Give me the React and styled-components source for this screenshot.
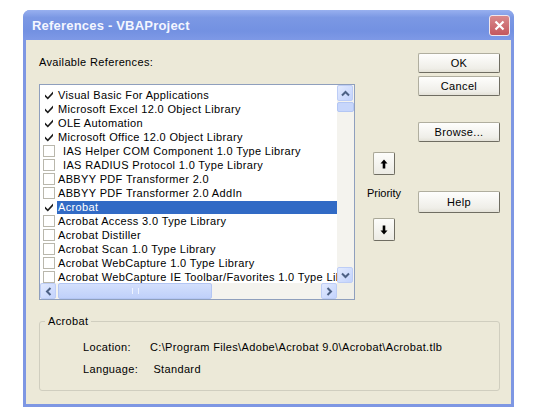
import React from "react";
import styled, { createGlobalStyle } from "styled-components";

const REFS = [
  { name: "Visual Basic For Applications", on: true },
  { name: "Microsoft Excel 12.0 Object Library", on: true },
  { name: "OLE Automation", on: true },
  { name: "Microsoft Office 12.0 Object Library", on: true },
  { name: "IAS Helper COM Component 1.0 Type Library", indent: true },
  { name: "IAS RADIUS Protocol 1.0 Type Library", indent: true },
  { name: "ABBYY PDF Transformer 2.0" },
  { name: "ABBYY PDF Transformer 2.0 AddIn" },
  { name: "Acrobat", on: true, selected: true },
  { name: "Acrobat Access 3.0 Type Library" },
  { name: "Acrobat Distiller" },
  { name: "Acrobat Scan 1.0 Type Library" },
  { name: "Acrobat WebCapture 1.0 Type Library" },
  { name: "Acrobat WebCapture IE Toolbar/Favorites 1.0 Type Library" },
];

const Global = createGlobalStyle`
  body {
    margin: 0;
    background: #ffffff;
    font-family: "Liberation Sans", Arial, sans-serif;
    font-size: 11px;
    letter-spacing: 0.35px;
    color: #000;
  }
`;

function Check() {
  return (
    <svg width="10" height="10" viewBox="0 0 10 10">
      <path d="M1 4.5 L3.8 7.2 L9 1.5 L9 4 L3.8 9.6 L1 6.8 Z" fill="#1b1b1b" />
    </svg>
  );
}

function Arrow({ down }) {
  return (
    <svg width="8" height="10" viewBox="0 0 8 10" style={{ transform: down ? "rotate(180deg)" : "none" }}>
      <path d="M4 0.5 L7.5 4.5 L5.3 4.5 L5.3 9.5 L2.7 9.5 L2.7 4.5 L0.5 4.5 Z" fill="#000" />
    </svg>
  );
}

function Chevron({ dir }) {
  const rot = { up: 0, down: 180, left: -90, right: 90 }[dir];
  return (
    <svg width="9" height="7" viewBox="0 0 9 7" style={{ transform: `rotate(${rot}deg)` }}>
      <path d="M1 5.5 L4.5 2 L8 5.5" fill="none" stroke="#4d6185" strokeWidth="2" />
    </svg>
  );
}

function App() {
  return (
    <>
      <Global />
      <Page>
        <Window>
          <TitleBar>
            <Title>References - VBAProject</Title>
            <CloseBtn>
              <svg width="11" height="11" viewBox="0 0 11 11">
                <path d="M1.5 1.5 L9.5 9.5 M9.5 1.5 L1.5 9.5" stroke="#fff" strokeWidth="2.2" />
              </svg>
            </CloseBtn>
          </TitleBar>
          <Client>
            <TopArea>
              <LeftCol>
                <Label>Available References:</Label>
                <ListBox>
                  <ListMain>
                    <Rows>
                      {REFS.map((r) => (
                        <Row key={r.name}>
                          <Box $on={r.on}>{r.on && <Check />}</Box>
                          <RowText $selected={r.selected} $indent={r.indent}>
                            {r.name}
                          </RowText>
                        </Row>
                      ))}
                    </Rows>
                    <VScroll>
                      <ScrollBtn><Chevron dir="up" /></ScrollBtn>
                      <VThumb />
                      <Track />
                      <ScrollBtn><Chevron dir="down" /></ScrollBtn>
                    </VScroll>
                  </ListMain>
                  <HScrollRow>
                    <HScroll>
                      <ScrollBtn><Chevron dir="left" /></ScrollBtn>
                      <HThumb>
                        <Grip />
                      </HThumb>
                      <Track />
                      <ScrollBtn><Chevron dir="right" /></ScrollBtn>
                    </HScroll>
                    <Corner />
                  </HScrollRow>
                </ListBox>
              </LeftCol>
              <MidCol>
                <ArrowBtn><Arrow /></ArrowBtn>
                <Priority>Priority</Priority>
                <ArrowBtn><Arrow down /></ArrowBtn>
              </MidCol>
              <RightCol>
                <Button>OK</Button>
                <Button $top={3}>Cancel</Button>
                <Button $top={26}>Browse...</Button>
                <Button $top={49} $h={22}>Help</Button>
              </RightCol>
            </TopArea>
            <Group>
              <Legend>Acrobat</Legend>
              <InfoGrid>
                <span>Location:</span>
                <span>C:\Program Files\Adobe\Acrobat 9.0\Acrobat\Acrobat.tlb</span>
                <span>Language:</span>
                <span>&nbsp;Standard</span>
              </InfoGrid>
            </Group>
          </Client>
        </Window>
      </Page>
    </>
  );
}

const Page = styled.div`
  padding: 10px 0 0 23px;
  width: 491px;
`;

const Window = styled.div`
  display: flex;
  flex-direction: column;
  width: 491px;
  background: #7e97e3;
  border-radius: 7px 7px 0 0;
  padding: 0 3px 3px 3px;
  box-sizing: border-box;
`;

const TitleBar = styled.div`
  height: 30px;
  margin: 0 -3px;
  padding: 0 4px 0 9px;
  display: flex;
  align-items: center;
  justify-content: space-between;
  border-radius: 7px 7px 0 0;
  background: linear-gradient(#98b0ef 0%, #7b98e4 25%, #7391e2 70%, #7e99e6 100%);
`;

const Title = styled.div`
  color: #f4f6ff;
  font-weight: bold;
  font-size: 13px;
  letter-spacing: 0.2px;
`;

const CloseBtn = styled.div`
  width: 19px;
  height: 19px;
  border: 1px solid #f1e6ea;
  border-radius: 3px;
  background: linear-gradient(#d9898c, #c4575d);
  display: flex;
  align-items: center;
  justify-content: center;
`;

const Client = styled.div`
  background: #ece9d8;
  padding: 15px 10px 13px 13px;
  display: flex;
  flex-direction: column;
`;

const TopArea = styled.div`
  display: flex;
`;

const LeftCol = styled.div`
  display: flex;
  flex-direction: column;
  width: 316px;
`;

const Label = styled.div`
  height: 14px;
  line-height: 14px;
  margin-bottom: 15px;
`;

const ListBox = styled.div`
  height: 216px;
  border: 1px solid #8f9fbd;
  background: #fff;
  box-sizing: border-box;
  display: flex;
  flex-direction: column;
`;

const ListMain = styled.div`
  flex: 1;
  display: flex;
  min-height: 0;
`;

const Rows = styled.div`
  flex: 1;
  overflow: hidden;
  padding-top: 3px;
`;

const Row = styled.div`
  height: 14px;
  display: flex;
  align-items: center;
  padding-left: 3px;
  white-space: nowrap;
`;

const Box = styled.div`
  width: 12px;
  height: 12px;
  flex: none;
  box-sizing: border-box;
  border: 1px solid ${(p) => (p.$on ? "#ffffff" : "#b9b7ac")};
  display: flex;
  align-items: center;
  justify-content: center;
  margin-right: 2px;
`;

const RowText = styled.div`
  flex: 1;
  height: 13px;
  line-height: 13px;
  padding-left: ${(p) => (p.$indent ? "6px" : "1px")};
  background: ${(p) => (p.$selected ? "#316ac5" : "transparent")};
  color: ${(p) => (p.$selected ? "#fff" : "#000")};
  overflow: hidden;
`;

const VScroll = styled.div`
  width: 17px;
  display: flex;
  flex-direction: column;
  background: #f4f3ee;
`;

const HScrollRow = styled.div`
  height: 16px;
  display: flex;
`;

const HScroll = styled.div`
  flex: 1;
  display: flex;
  background: #f4f3ee;
`;

const Corner = styled.div`
  width: 17px;
  background: #f0efe8;
`;

const ScrollBtn = styled.div`
  width: 16px;
  height: 16px;
  flex: none;
  box-sizing: border-box;
  border: 1px solid #bdcdf6;
  border-radius: 2px;
  background: linear-gradient(135deg, #e2eafe, #c3d3fd);
  display: flex;
  align-items: center;
  justify-content: center;
`;

const Track = styled.div`
  flex: 1;
`;

const VThumb = styled.div`
  height: 8px;
  margin-top: 1px;
  border: 1px solid #b3c6f4;
  border-radius: 2px;
  background: #c7d6fb;
`;

const HThumb = styled.div`
  width: 154px;
  margin-left: 2px;
  box-sizing: border-box;
  border: 1px solid #b3c6f4;
  border-radius: 2px;
  background: linear-gradient(#d3dffc, #bfd0fa);
  display: flex;
  align-items: center;
  justify-content: center;
`;

const Grip = styled.div`
  width: 5px;
  height: 6px;
  border-left: 1px solid #eef3ff;
  border-right: 1px solid #eef3ff;
`;

const MidCol = styled.div`
  width: 58px;
  display: flex;
  flex-direction: column;
  align-items: center;
  padding-top: 97px;
`;

const ArrowBtn = styled.div`
  width: 22px;
  height: 23px;
  box-sizing: border-box;
  border: 1px solid #a9a797;
  border-right-color: #6f6d62;
  border-bottom-color: #6f6d62;
  border-radius: 2px;
  background: linear-gradient(#fdfdfb, #ecebe4);
  display: flex;
  align-items: center;
  justify-content: center;
`;

const Priority = styled.div`
  line-height: 14px;
  margin: 11px 0 18px;
  letter-spacing: 0;
`;

const RightCol = styled.div`
  width: 82px;
  margin-left: 5px;
  margin-top: -2px;
  display: flex;
  flex-direction: column;
`;

const Button = styled.div`
  height: ${(p) => p.$h || 20}px;
  margin-top: ${(p) => p.$top || 0}px;
  box-sizing: border-box;
  border: 1px solid #b0ae9f;
  border-right-color: #6f6d62;
  border-bottom-color: #6f6d62;
  border-radius: 2px;
  background: linear-gradient(#fefefd, #efeee8 80%, #e4e2d8);
  display: flex;
  align-items: center;
  justify-content: center;
`;

const Group = styled.fieldset`
  margin: 14px 0 0 0;
  padding: 0;
  border: 1px solid #d0cebf;
  border-radius: 3px;
  width: 461px;
  box-sizing: border-box;
  min-width: 0;
`;

const Legend = styled.legend`
  padding: 0 3px;
  margin-left: 5px;
  line-height: 14px;
`;

const InfoGrid = styled.div`
  display: grid;
  grid-template-columns: 67px 1fr;
  row-gap: 8px;
  line-height: 14px;
  padding: 12px 0 14px 43px;
`;

export default App;
